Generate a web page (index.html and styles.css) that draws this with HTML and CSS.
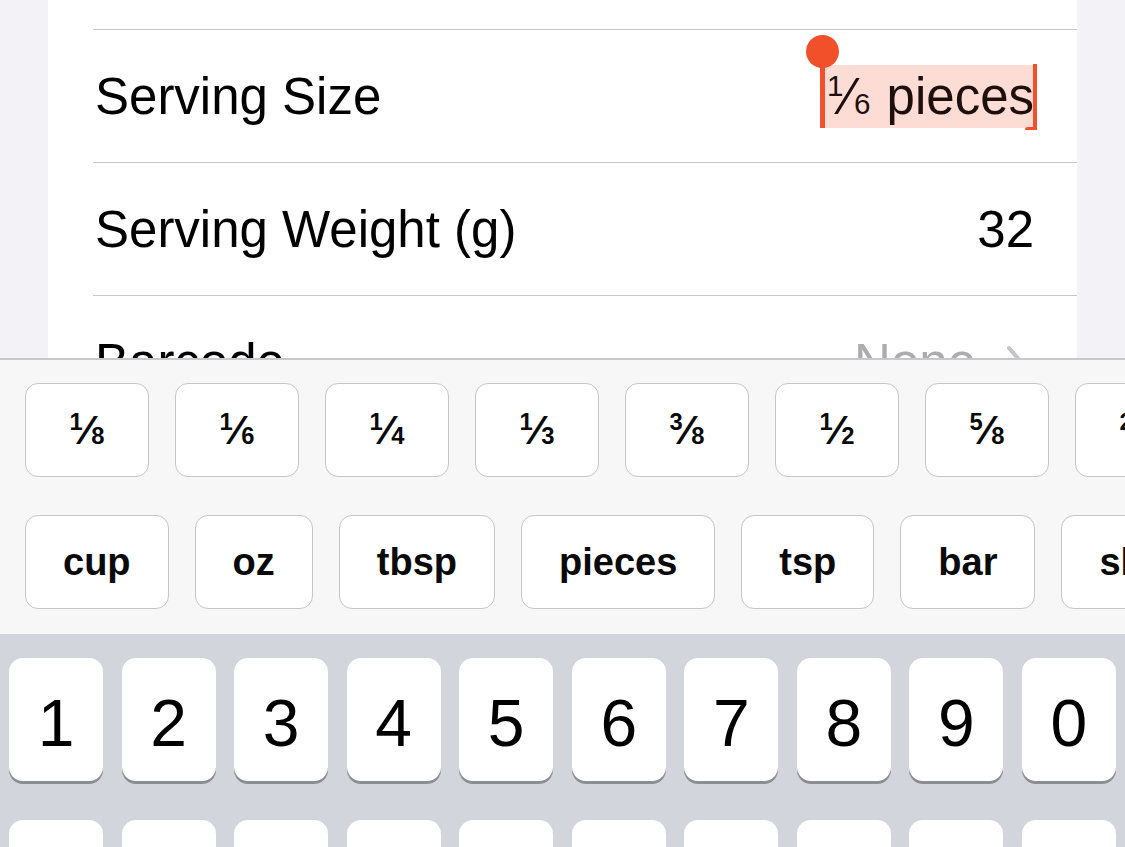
FILE: index.html
```html
<!DOCTYPE html>
<html lang="en">
<head>
<meta charset="utf-8">
<title>Serving Size</title>
<link rel="stylesheet" href="styles.css">
</head>
<body>
<div class="screen">
  <div class="card">
    <div class="row">
      <span class="label">Serving Size</span>
      <span class="value">
        <span class="sel">
          <span class="handle-start"></span>
          <span class="frac"><span class="n">1</span><span class="sl">⁄</span><span class="d">6</span></span> pieces
          <span class="handle-end"></span>
        </span>
      </span>
    </div>
    <div class="row">
      <span class="label">Serving Weight (g)</span>
      <span class="value">32</span>
    </div>
    <div class="row">
      <span class="label">Barcode</span>
      <span class="value muted">None
        <svg class="chev" width="20" height="36" viewBox="0 0 20 36"><path d="M3 3 L16 18 L3 33" fill="none" stroke="#c4c4c8" stroke-width="4" stroke-linecap="round" stroke-linejoin="round"/></svg>
      </span>
    </div>
    <div class="row">
      <span class="label">Notes</span>
      <span class="value muted"></span>
    </div>
  </div>

  <div class="keyboard">
    <div class="accessory">
      <div class="chips">
        <button class="chip fr"><span class="frac"><span class="n">1</span><span class="sl">⁄</span><span class="d">8</span></span></button>
        <button class="chip fr"><span class="frac"><span class="n">1</span><span class="sl">⁄</span><span class="d">6</span></span></button>
        <button class="chip fr"><span class="frac"><span class="n">1</span><span class="sl">⁄</span><span class="d">4</span></span></button>
        <button class="chip fr"><span class="frac"><span class="n">1</span><span class="sl">⁄</span><span class="d">3</span></span></button>
        <button class="chip fr"><span class="frac"><span class="n">3</span><span class="sl">⁄</span><span class="d">8</span></span></button>
        <button class="chip fr"><span class="frac"><span class="n">1</span><span class="sl">⁄</span><span class="d">2</span></span></button>
        <button class="chip fr"><span class="frac"><span class="n">5</span><span class="sl">⁄</span><span class="d">8</span></span></button>
        <button class="chip fr"><span class="frac"><span class="n">2</span><span class="sl">⁄</span><span class="d">3</span></span></button>
      </div>
      <div class="chips">
        <button class="chip">cup</button>
        <button class="chip">oz</button>
        <button class="chip">tbsp</button>
        <button class="chip">pieces</button>
        <button class="chip">tsp</button>
        <button class="chip">bar</button>
        <button class="chip">slice</button>
      </div>
    </div>
    <div class="keys">
      <div class="keyrow">
        <div class="key">1</div><div class="key">2</div><div class="key">3</div><div class="key">4</div><div class="key">5</div>
        <div class="key">6</div><div class="key">7</div><div class="key">8</div><div class="key">9</div><div class="key">0</div>
      </div>
      <div class="keyrow">
        <div class="key">-</div><div class="key">/</div><div class="key">:</div><div class="key">;</div><div class="key">(</div>
        <div class="key">)</div><div class="key">$</div><div class="key">&amp;</div><div class="key">@</div><div class="key">"</div>
      </div>
    </div>
  </div>
</div>
</body>
</html>
```

FILE: styles.css
```css
* { box-sizing: border-box; }

html, body {
  margin: 0;
  padding: 0;
  background: #f2f2f7;
  font-family: "Liberation Sans", Arial, sans-serif;
  overflow: hidden;
}

.screen {
  position: relative;
  width: 1125px;
  height: 847px;
  overflow: hidden;
}

.card {
  margin: 0 48px;
  height: 100%;
  background: #ffffff;
  padding-top: 29px;
}

.row {
  margin-left: 45px;
  height: 133px;
  border-top: 1px solid #c8c7cc;
  display: flex;
  align-items: center;
  justify-content: space-between;
  padding-left: 2px;
  padding-right: 43px;
  font-size: 51px;
  color: #000;
}

.value {
  display: flex;
  align-items: center;
}

.muted { color: #ababb0; }

.chev {
  margin-left: 30px;
  margin-right: 8px;
  margin-top: 2px;
}

/* selection */
.sel {
  position: relative;
  display: inline-block;
  line-height: 63px;
  height: 63px;
  background: #fddcd5;
  color: #1e0f0c;
  padding: 0 2px 0 6px;
  margin-right: -2px;
}

.handle-start {
  position: absolute;
  left: -1px;
  top: 0;
  bottom: 0;
  width: 5px;
  background: #f2502a;
}

.handle-start::before {
  content: "";
  position: absolute;
  left: -14px;
  top: -30px;
  width: 33px;
  height: 33px;
  border-radius: 50%;
  background: #f2502a;
}

.handle-end {
  position: absolute;
  right: -1px;
  top: -1px;
  bottom: -2px;
  width: 4px;
  background: #f2502a;
}

.handle-end::before {
  content: "";
  position: absolute;
  right: 0;
  bottom: 0;
  width: 12px;
  height: 3px;
  border-radius: 10px 0 0 0;
  background: #f2502a;
}

/* fractions */
.frac { white-space: nowrap; }
.frac .n {
  font-size: 0.58em;
  vertical-align: 0.6em;
  line-height: 1;
}
.frac .d {
  font-size: 0.58em;
  line-height: 1;
}
.frac .sl {
  margin: 0 0.02em;
}
.sel .frac { margin-right: 2px; }

/* keyboard */
.keyboard {
  position: absolute;
  left: 0;
  right: 0;
  top: 358px;
  bottom: 0;
  display: flex;
  flex-direction: column;
}

.accessory {
  flex: none;
  height: 276px;
  background: #f7f7f8;
  border-top: 2px solid #c8c8cc;
  padding: 23px 0 0 25px;
  display: flex;
  flex-direction: column;
  gap: 38px;
  overflow: hidden;
}

.chips {
  flex: none;
  display: flex;
  gap: 26px;
  flex-wrap: nowrap;
}

.chip {
  flex: none;
  height: 94px;
  padding: 0 37px;
  background: #ffffff;
  border: 1px solid #c6c6ca;
  border-radius: 13px;
  font-family: "Liberation Sans", Arial, sans-serif;
  font-weight: bold;
  font-size: 38px;
  color: #0a0a0a;
  display: flex;
  align-items: center;
  justify-content: center;
}

.chip.fr {
  width: 124px;
  padding: 0;
  font-size: 41px;
}

.keys {
  flex: 1;
  background: #d2d5db;
  padding: 24px 9px 0 9px;
  display: flex;
  flex-direction: column;
  gap: 39px;
  overflow: hidden;
}

.keyrow {
  flex: none;
  display: flex;
  gap: 18.5px;
}

.key {
  flex: 1;
  height: 123px;
  background: #ffffff;
  border-radius: 14px;
  box-shadow: 0 3px 0 #8d8e92;
  display: flex;
  align-items: center;
  justify-content: center;
  padding-top: 7px;
  font-size: 66px;
  color: #000;
}
```
